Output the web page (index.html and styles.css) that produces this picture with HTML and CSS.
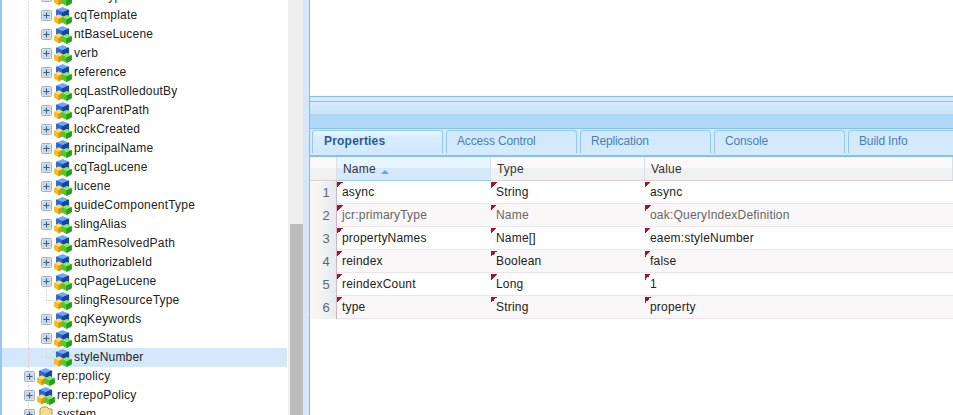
FILE: index.html
```html
<!DOCTYPE html>
<html>
<head>
    <title>CRXDE Lite</title>
    <link rel="stylesheet" href="styles.css">
</head>
<body>
    <!-- Shared icons for the repository tree -->
    <svg class="icon-defs" width="0" height="0">
        <symbol id="plus" viewBox="0 0 11 11">
            <rect x="0.5" y="0.5" width="10" height="10" rx="1" fill="#e4ecf3" stroke="#9db2c5"/>
            <rect x="1.5" y="1.5" width="8" height="8" fill="#c6d5e3"/>
            <path d="M2.5 5.5h6M5.5 2.5v6" stroke="#3d5f80" stroke-width="1"/>
        </symbol>
        <symbol id="node" viewBox="0 0 18 18">
            <g stroke-linejoin="round" stroke-width="1">
                <path d="M8.6 0.6l6 2.4-6 2.6-6-2.6z" fill="#6fa8f0" stroke="#6fa8f0"/>
                <path d="M2.6 3l6 2.6V11.4L2.6 8.8z" fill="#2a66dc" stroke="#2a66dc"/>
                <path d="M14.6 3l-6 2.6V11.4l6-2.6z" fill="#1443a8" stroke="#1443a8"/>
                <path d="M4.8 7.8l4.4 2.2-4.4 2.2L0.6 10z" fill="#fae06a" stroke="#fae06a"/>
                <path d="M0.6 10l4.2 2.2v4.6L0.6 14.6z" fill="#f4bc20" stroke="#f4bc20"/>
                <path d="M9.2 10l-4.4 2.2v4.6l4.4-2.2z" fill="#d09a10" stroke="#d09a10"/>
                <path d="M12.8 8.4l4.6 2.2-4.6 2.2-4.6-2.2z" fill="#92e85c" stroke="#92e85c"/>
                <path d="M8.2 10.6l4.6 2.2v4.6l-4.6-2.2z" fill="#50c830" stroke="#50c830"/>
                <path d="M17.4 10.6l-4.6 2.2v4.6l4.6-2.2z" fill="#26a01c" stroke="#26a01c"/>
            </g>
        </symbol>
        <symbol id="folder" viewBox="0 0 18 18">
            <path d="M3 16V3l2-2h5l2 2h3v13z" fill="#f3dc8c" stroke="#b09a50"/>
        </symbol>
    </svg>

    <!-- Repository tree -->
    <div class="tree-pane">
        <div class="tree" id="tree"></div>
    </div>
    <div class="scrollbar"><div class="scrollbar-thumb"></div></div>
    <div class="splitter"></div>

    <!-- Right side: editor, tabs and property grid -->
    <div class="main-pane">
        <div class="editor"></div>
        <div class="panel-gap"></div>
        <div class="panel-header"></div>
        <div class="tab-strip">
            <div class="tab tab-active">Properties</div>
            <div class="tab">Access Control</div>
            <div class="tab">Replication</div>
            <div class="tab">Console</div>
            <div class="tab">Build Info</div>
        </div>
        <div class="grid">
            <div class="grid-head">
                <div class="head-cell"></div>
                <div class="head-cell head-sorted">Name <span class="sort-arrow"></span></div>
                <div class="head-cell">Type</div>
                <div class="head-cell">Value</div>
            </div>
            <div id="grid-rows"></div>
        </div>
    </div>

    <script>
        // Tree rows: name, level, kind of row
        var treeRows = [
            ["nodeType", 3, "open"], ["cqTemplate", 3, "open"], ["ntBaseLucene", 3, "open"],
            ["verb", 3, "open"], ["reference", 3, "open"], ["cqLastRolledoutBy", 3, "open"],
            ["cqParentPath", 3, "open"], ["lockCreated", 3, "open"], ["principalName", 3, "open"],
            ["cqTagLucene", 3, "open"], ["lucene", 3, "open"], ["guideComponentType", 3, "open"],
            ["slingAlias", 3, "open"], ["damResolvedPath", 3, "open"], ["authorizableId", 3, "open"],
            ["cqPageLucene", 3, "open"], ["slingResourceType", 3, "leaf"], ["cqKeywords", 3, "open"],
            ["damStatus", 3, "open"], ["styleNumber", 3, "selected"],
            ["rep:policy", 2, "open"], ["rep:repoPolicy", 2, "open"], ["system", 2, "folder"]
        ];

        var treeHtml = "";
        treeRows.forEach(function (row) {
            var leaf = row[2] == "leaf" || row[2] == "selected";
            var icon = row[2] == "folder" ? "folder" : "node";
            treeHtml += '<div class="tree-row level-' + row[1] + ' ' + row[2] + '">';
            treeHtml += leaf ? '<span class="no-plus"></span>'
                : '<svg class="plus"><use href="#plus"/></svg>';
            treeHtml += '<svg class="node-icon"><use href="#' + icon + '"/></svg>';
            treeHtml += '<span>' + row[0] + '</span></div>';
        });
        document.getElementById("tree").innerHTML = treeHtml;

        // Property grid rows
        var props = [
            ["async", "String", "async"],
            ["jcr:primaryType", "Name", "oak:QueryIndexDefinition"],
            ["propertyNames", "Name[]", "eaem:styleNumber"],
            ["reindex", "Boolean", "false"],
            ["reindexCount", "Long", "1"],
            ["type", "String", "property"]
        ];

        var gridHtml = "";
        props.forEach(function (p, i) {
            gridHtml += '<div class="grid-row' + (i % 2 ? ' alt' : '') + (i == 1 ? ' protected' : '') + '">';
            gridHtml += '<div class="row-num">' + (i + 1) + '</div>';
            gridHtml += '<div class="cell">' + p[0] + '</div>';
            gridHtml += '<div class="cell">' + p[1] + '</div>';
            gridHtml += '<div class="cell">' + p[2] + '</div></div>';
        });
        document.getElementById("grid-rows").innerHTML = gridHtml;
    </script>
</body>
</html>
```

FILE: styles.css
```css
html, body {
    margin: 0;
    height: 100%;
    overflow: hidden;
}
body {
    display: flex;
    background: #fff;
    font-family: "Liberation Sans", Arial, sans-serif;
    font-size: 12px;
    letter-spacing: 0.2px;
    color: #222;
}
.icon-defs {
    display: none;
}

/* Tree */
.tree-pane {
    width: 285px;
    padding-right: 1px;
    flex: none;
    border-left: 2px solid #93c8f2;
    overflow: hidden;
}
.tree {
    margin-top: -13px;
}
.tree-row {
    display: flex;
    align-items: center;
    height: 19px;
    line-height: 19px;
    white-space: nowrap;
    background-repeat: no-repeat;
    background-image: repeating-linear-gradient(#e3cdd5 0 1px, transparent 1px 2px);
    background-size: 1px 100%;
    background-position: 26px 0;
}
.level-3 {
    padding-left: 39px;
}
.level-2 {
    padding-left: 22px;
}
.leaf, .selected {
    background-image:
        repeating-linear-gradient(#e3cdd5 0 1px, transparent 1px 2px),
        repeating-linear-gradient(#d0d0d0 0 1px, transparent 1px 2px),
        repeating-linear-gradient(90deg, #d0d0d0 0 1px, transparent 1px 2px);
    background-size: 1px 100%, 1px 10px, 8px 1px;
    background-position: 26px 0, 44px 0, 44px 9px;
}
.selected {
    background-color: #d3e8fb;
}
.plus {
    width: 11px;
    height: 11px;
    flex: none;
    margin-right: 2px;
}
.no-plus {
    width: 13px;
    flex: none;
}
.node-icon {
    width: 18px;
    height: 18px;
    flex: none;
    margin-right: 2px;
}

/* Scrollbar and splitter */
.scrollbar {
    width: 13px;
    flex: none;
    padding: 224px 0 0 2px;
    background: #efefef;
}
.scrollbar-thumb {
    height: 100%;
    background: #bcbcbc;
}
.splitter {
    width: 6px;
    flex: none;
    background: #d6e7f9;
}

/* Main pane */
.main-pane {
    flex: 1;
    min-width: 0;
    display: flex;
    flex-direction: column;
    border-left: 1px solid #7dbdf0;
}
.editor {
    height: 96px;
    flex: none;
    background: #fff;
    border-bottom: 1px solid #7dbdf0;
}
.panel-gap {
    height: 4px;
    flex: none;
    background: #d8e9fa;
}
.panel-header {
    height: 26px;
    flex: none;
    border-top: 1px solid #84c0f0;
    background: linear-gradient(#d6ebfb 0, #c6e2f8 12px, #aed6f6 12px, #b4d9f7 100%);
}

/* Tabs */
.tab-strip {
    display: flex;
    gap: 3px;
    height: 29px;
    flex: none;
    box-sizing: border-box;
    padding: 1px 0 0 2px;
    background: #d6e9fb;
    border-top: 1px solid #84c0f0;
    border-bottom: 2px solid #84c0f0;
}
.tab {
    width: 131px;
    height: 23px;
    flex: none;
    box-sizing: border-box;
    padding-left: 10px;
    line-height: 21px;
    letter-spacing: -0.15px;
    color: #4a7fb5;
    border: 1px solid #95c8f1;
    border-bottom: 0;
    border-radius: 4px 4px 0 0;
    background: linear-gradient(#d2e9fc, #d4ebfe);
}
.tab-active {
    padding-left: 11px;
    font-weight: bold;
    letter-spacing: 0.2px;
    color: #2a5a96;
    background: linear-gradient(#eef8ff 0, #d8ecfd 6px, #d0e8fd 100%);
}

/* Property grid */
.grid-head, .grid-row {
    display: grid;
    grid-template-columns: 27px 154px 154px 1fr;
}
.grid-head {
    height: 24px;
    box-sizing: border-box;
    grid-template-rows: 23px;
    background: linear-gradient(#fbf9fa 50%, #eff0f2 50%);
    border-bottom: 1px solid #e0d0d2;
}
.head-cell {
    box-sizing: border-box;
    padding: 2px 0 0 6px;
    line-height: 21px;
    border-right: 1px solid #d9dfe6;
    color: #333;
}
.head-sorted {
    background: linear-gradient(#e8f4fe 50%, #d5e9fb 50%);
    box-shadow: 0 1px 0 #9ccdf3;
}
.sort-arrow {
    display: inline-block;
    width: 0;
    height: 0;
    margin-left: 2px;
    vertical-align: -1px;
    border: 4px solid transparent;
    border-top: 0;
    border-bottom: 4px solid #5ba8e2;
}
.grid-row {
    height: 23px;
    box-sizing: border-box;
    border-bottom: 1px solid #ebe6e9;
    line-height: 23px;
}
.alt {
    background: #f9f7f8;
}
.protected .cell {
    color: #666;
}
.row-num {
    padding-right: 6px;
    text-align: right;
    font-size: 13px;
    color: #666;
    background: linear-gradient(90deg, #f7f5f6 30%, #e6ebf0);
    border-right: 1px solid #c9b7bb;
}
.cell {
    padding-left: 5px;
    background: linear-gradient(135deg, #a8102c 50%, transparent 50%) no-repeat 0 1px / 6px 6px;
}
```
